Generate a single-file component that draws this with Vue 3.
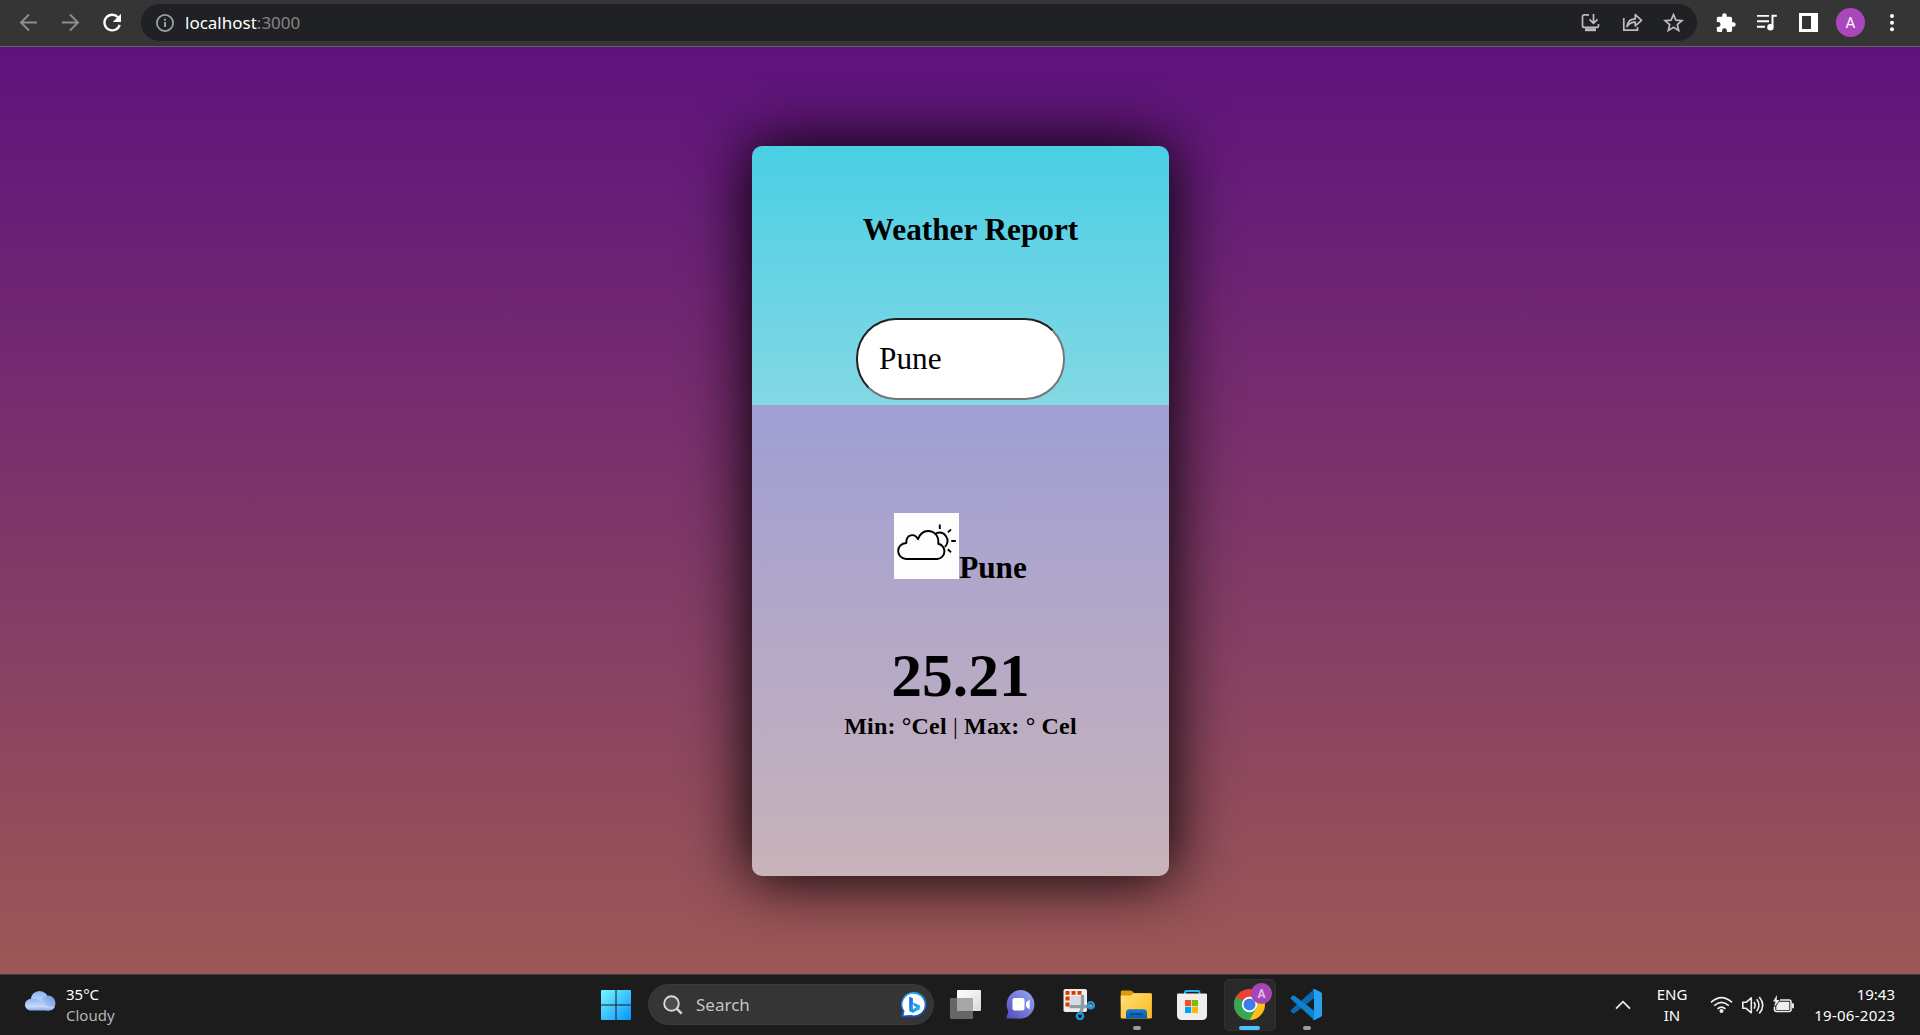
<script setup>
import { ref } from 'vue'

const city = ref('Pune')
const report = { name: 'Pune', temp: 25.21 }
</script>

<template>
  <div class="screen">
    <header class="toolbar">
      <svg class="nav" viewBox="0 0 141 46" fill="none">
        <g stroke="#8d8d8d" stroke-width="1.9">
          <path d="M37 22.5H21.500M29 14.500l-8 8 8 8" />
          <path d="M62 22.500h15.500M70 14.500l8 8-8 8" />
        </g>
        <path d="M118 17.300A7.800 7.800 0 1 0 119.700 24.800" stroke="#fff" stroke-width="2.300" />
        <path d="M121 13.800v8.200h-8.200z" fill="#fff" />
      </svg>
      <div class="omnibox">
        <svg class="info" viewBox="0 0 20 20" fill="none">
          <circle cx="10" cy="10" r="8.100" stroke="#9aa0a6" stroke-width="1.800" />
          <path d="M10 8.900v5.200M10 5.700v2" stroke="#9aa0a6" stroke-width="2" />
        </svg>
        <span class="url">localhost<i>:3000</i></span>
        <svg class="actions" viewBox="1570 4 127 37" fill="none" stroke="#bdbdbd" stroke-width="1.700">
          <path d="M1589 14.900h-4.500q-2 0-2 2v8.500q0 2 2 2h12q2 0 2-2v-1.500M1593.500 14v9M1589.500 19.300l4 4 4-4" />
          <path d="M1585 29.700h11" stroke-width="3" />
          <path d="M1623.800 18v12.200h13.700V27" />
          <path d="M1627 26.500c.8-5.500 4.300-7.700 8.300-7.700v-4.300l6.200 5.800-6.200 5.600v-3.700c-3.700 0-6.200 1.200-8.300 4.300z" stroke-linejoin="round" />
          <path d="M1673.500 14.600l2.400 5.500 6 .5-4.600 3.900 1.400 5.900-5.200-3.100-5.200 3.100 1.400-5.900-4.600-3.900 6-.5z" />
        </svg>
      </div>
      <svg class="menu" viewBox="1697 0 223 46">
        <path transform="translate(1715 12.300) scale(.9)" fill="#fff" d="M20.500 11H19V7c0-1.100-.9-2-2-2h-4V3.500a2.500 2.500 0 0 0-5 0V5H4c-1.100 0-2 .9-2 2v3.800h1.500a2.700 2.700 0 0 1 0 5.400H2V20c0 1.100.9 2 2 2h3.800v-1.500a2.700 2.700 0 0 1 5.400 0V22H17c1.100 0 2-.9 2-2v-4h1.500a2.500 2.500 0 0 0 0-5z" />
        <path d="M1757 15.900h12M1757 21.300h12M1757 26.800h8" stroke="#fff" stroke-width="1.900" />
        <path d="M1776.800 15.800h-4.300v11" fill="none" stroke="#fff" stroke-width="2" />
        <circle cx="1770.400" cy="27.300" r="3.200" fill="#fff" />
        <path fill="#fff" fill-rule="evenodd" d="M1799 13h19v19h-19zM1802 16v13h9V16z" />
        <circle cx="1850.500" cy="22.500" r="14.500" fill="#ab47bc" />
        <text x="1850.500" y="27.800" text-anchor="middle" class="initial">A</text>
        <g fill="#fff"><circle cx="1892" cy="16" r="2" /><circle cx="1892" cy="22.700" r="2" /><circle cx="1892" cy="29.300" r="2" /></g>
      </svg>
    </header>

    <main class="page">
      <section class="card">
        <div class="search-panel">
          <h1>Weather Report</h1>
          <input v-model="city" type="text" spellcheck="false" />
        </div>
        <div class="result">
          <div class="place">
            <svg viewBox="0 0 65 66" fill="none" stroke="#000" stroke-width="1.900" stroke-linecap="round">
              <rect width="65" height="66" fill="#fdfdfd" stroke="none" />
              <path d="M12 46H43.500a7.700 7.700 0 0 0 .8-15.200C45 23 40.500 18 34 18c-4.500 0-8 2.600-10 8.200C20.500 19.500 12 21.500 12.300 30 1.500 30.500 1.500 45 12 46z" stroke-linejoin="round" />
              <path d="M42.500 20.200c8-2.800 14.500 6.300 8.800 13.300" />
              <path d="M45.800 11.500v4.500M54 19.300l3-3M57.300 28h4.500M53.800 36.300l3.200 3" stroke-linecap="butt" />
            </svg>
            <span>{{ report.name }}</span>
          </div>
          <div class="temp">{{ report.temp }}</div>
          <div class="range"><b>Min: °Cel</b> | <b>Max: ° Cel</b></div>
        </div>
      </section>
    </main>

    <footer class="taskbar">
      <div class="weather">
        <svg viewBox="0 0 32 22">
          <defs>
            <linearGradient id="cloud" x1="0" y1="0" x2="0" y2="1"><stop stop-color="#8bb4f5" /><stop offset=".65" stop-color="#c6daf8" /><stop offset="1" stop-color="#85aae9" /></linearGradient>
            <linearGradient id="puff" x1="0" y1="1" x2="1" y2="0"><stop stop-color="#d2e1fa" /><stop offset="1" stop-color="#6292e3" /></linearGradient>
          </defs>
          <circle cx="15.500" cy="9.800" r="8.800" fill="url(#cloud)" />
          <circle cx="24" cy="13" r="7.500" fill="url(#puff)" />
          <path d="M7 20.600h17.500q5 0 6.500-4c-7 1-10-1-13-3.600C13 7 1 7.500 1 14.600 1 18 3.500 20.600 7 20.600z" fill="url(#cloud)" />
        </svg>
        <div class="lines"><span>35°C</span><span class="dim">Cloudy</span></div>
      </div>
      <div class="apps">
        <svg class="start" viewBox="0 0 30 30">
          <linearGradient id="win" x2="1" y2="1"><stop stop-color="#7af5ff" /><stop offset="1" stop-color="#0594fd" /></linearGradient>
          <path fill="url(#win)" d="M1 0h13.500v14.500H0V1q0-1 1-1zM15.500 0H29q1 0 1 1v13.500H15.500zM0 15.500h14.500V30H1q-1 0-1-1zM15.500 15.500H30V29q0 1-1 1H15.500z" />
        </svg>
        <div class="search">
          <svg class="lens" viewBox="0 0 20 20" fill="none" stroke="#d9d9d9"><circle cx="8.500" cy="8.500" r="7.300" stroke-width="1.900" fill="#4c4c4c" /><path d="M13.700 13.700l5 5" stroke-width="2.500" /></svg>
          <span>Search</span>
          <svg class="bing" viewBox="0 0 26 26">
            <linearGradient id="bb" x2=".3" y2="1"><stop stop-color="#20b9ee" /><stop offset="1" stop-color="#1748c8" /></linearGradient>
            <linearGradient id="bl" x2="1" y2="1"><stop stop-color="#1660df" /><stop offset="1" stop-color="#28c9f5" /></linearGradient>
            <path d="M13 0a12.600 12.600 0 1 1 0 25.200H.5V22l1.300-3A12.600 12.600 0 0 1 13 0z" fill="url(#bb)" />
            <path d="M13 1.900a10.800 10.800 0 1 1-3 21.200l-7.500.4 1-4.500A10.800 10.800 0 0 1 13 1.900z" fill="#fff" />
            <path d="M8.200 4.700l3.700 1.500v11l3.500-2-2.300-1.100-1.200-3.700 7 2.800v4.100L11.700 21l-3.500-2z" fill="url(#bl)" />
          </svg>
        </div>
        <svg class="slot" viewBox="938 975 57 60">
          <linearGradient id="tv" x2="1" y2="1"><stop stop-color="#fff" /><stop offset="1" stop-color="#d9d9d9" /></linearGradient>
          <rect x="957" y="990" width="24" height="21" rx="1" fill="url(#tv)" />
          <rect x="950" y="998" width="23" height="21" rx="1" fill="#666" /><path d="M957 998h16v13h-16z" fill="#a7a7a7" />
        </svg>
        <svg class="slot" viewBox="995.500 975 57 60">
          <linearGradient id="chat" x1="1" x2="0" y2="1"><stop stop-color="#91a9f2" /><stop offset=".5" stop-color="#777cda" /><stop offset="1" stop-color="#5148be" /></linearGradient>
          <path d="M1022 990a14.400 14.400 0 1 1-4 28.500h-11v-1.500l1.800-5.500A14.600 14.600 0 0 1 1022 990z" fill="url(#chat)" />
          <rect x="1013" y="998" width="12" height="12.500" rx="2" fill="#fff" /><path d="M1026.500 1002.500l3.700-3v10l-3.700-3z" fill="#fff" />
        </svg>
        <svg class="slot" viewBox="1052 975 57 60">
          <rect x="1063.500" y="989" width="23.500" height="23" rx="1.800" fill="#eee" />
          <rect x="1070" y="996" width="11" height="10" fill="#d8dce0" />
          <path d="M1065.500 992.800h17" stroke="#d83b01" stroke-width="3.700" stroke-dasharray="4 2" fill="none" />
          <path d="M1067.500 996.500v10" stroke="#d83b01" stroke-width="4" stroke-dasharray="4 2" fill="none" />
          <path d="M1069.500 1006.700h17q4 0 5.500-2M1082.500 995v9q0 7-3.500 10" stroke="#909ba3" stroke-width="3.300" fill="none" />
          <g fill="none" stroke="#1b9de2" stroke-width="2.300"><circle cx="1090.800" cy="1005.200" r="3.100" /><circle cx="1080" cy="1016" r="3.100" /></g>
        </svg>
        <svg class="slot" viewBox="1109 975 57 60">
          <linearGradient id="fold" x2="1" y2="1"><stop stop-color="#ffe078" /><stop offset="1" stop-color="#fdb91c" /></linearGradient>
          <linearGradient id="fb" x2="0" y2="1"><stop stop-color="#147cd3" /><stop offset="1" stop-color="#075da9" /></linearGradient>
          <path d="M1122 990.500h8.500q1 0 1.800.8l2 2h16q1.500 0 1.500 1.500V1002h-31v-10q0-1.500 1.200-1.500z" fill="#dc9a05" />
          <path d="M1120.700 995.500h10l2.800-2.200h17q1.400 0 1.400 1.400v22.700q0 1-1 1h-29q-1.200 0-1.200-1z" fill="url(#fold)" />
          <path d="M1126 1018.300v-5.500q0-3.500 3.500-3.500h14q3.500 0 3.500 3.500v5.500z" fill="url(#fb)" /><path d="M1130 1014.200h12.500" stroke="#064579" stroke-width="1.700" />
          <rect x="1133" y="1026" width="8" height="4" rx="2" fill="#9a9a9a" />
        </svg>
        <svg class="slot" viewBox="1166 975 57 60">
          <path d="M1185 994.500v-2q0-1.500 1.500-1.500h11.500q1.500 0 1.500 1.500v2" fill="none" stroke="#27b5ee" stroke-width="2" />
          <path d="M1178 993.500h28q1 0 1 1v20.500q0 5-5 5h-20q-5 0-5-5v-20.500q0-1 1-1z" fill="#eee" />
          <path d="M1185 1000h6.200v6.200h-6.200z" fill="#f25022" /><path d="M1192 1000h6v6.200h-6z" fill="#7fba00" /><path d="M1185 1007h6.200v6h-6.200z" fill="#00a4ef" /><path d="M1192 1007h6v6h-6z" fill="#ffb900" />
        </svg>
        <svg class="slot" viewBox="1223 975 57 60">
          <rect x="1224.500" y="979.500" width="51" height="51" rx="5" fill="#292929" stroke="#333" />
          <g transform="translate(1249.500 1004.500)">
            <circle r="15.500" fill="#ea4335" />
            <path d="M0 0L-13.400-7.700A15.500 15.500 0 0 0 0 15.500L7 3.800z" fill="#34a853" />
            <path d="M0-7.700H13.400A15.500 15.500 0 0 1 0 15.500L6.800 3.700z" fill="#fbc116" />
            <circle r="7.700" fill="#fff" /><circle r="6" fill="#3b7ded" />
          </g>
          <circle cx="1261.500" cy="993.500" r="10.500" fill="#a646b5" />
          <text x="1261.500" y="998" text-anchor="middle" class="badge">A</text>
          <rect x="1239" y="1026" width="21" height="4" rx="2" fill="#4cc2ff" />
        </svg>
        <svg class="slot" viewBox="1280 975 57 60">
          <path d="M1314 989.200l-23 20.700q-.8 1 0 1.800l1.800 1.500q.9.500 1.700 0L1314.500 998z" fill="#0969b5" />
          <path d="M1314 1019.800L1291 999q-.8-1 0-1.800l1.800-1.600q.9-.4 1.700.1l20 15.400z" fill="#0c83ce" />
          <path d="M1314.500 989l6.500 3.200q1 .5 1 1.700v21.200q0 1.200-1 1.700l-6.500 3.200q-.8.300-1.800-.6 1.300 0 1.300-1.500v-26.500q0-1.500-1.300-1.700 1-.9 1.800-.7z" fill="#27a1ee" />
          <rect x="1303" y="1026" width="8" height="4" rx="2" fill="#9a9a9a" />
        </svg>
      </div>
      <div class="tray">
        <svg class="chev" viewBox="0 0 16 10" fill="none" stroke="#eee" stroke-width="1.800"><path d="M1 8.700l7-7 7 7" /></svg>
        <div class="lines lang"><span>ENG</span><span>IN</span></div>
        <svg class="status" viewBox="1708 990 90 30" fill="none" stroke="#eee" stroke-width="1.600">
          <path d="M1711 1002.400q10.500-9.600 21 0M1714.200 1005.700q7.300-6.800 14.600 0M1717.500 1008.900q4-3.600 8 0" />
          <circle cx="1721.500" cy="1011" r="2" fill="#eee" stroke="none" />
          <path d="M1742.800 1002.300h3.300l5.200-4.500v15l-5.200-4.500h-3.300z" stroke-linejoin="round" />
          <path d="M1754 1002q2.200 3.300 0 6.600M1756.700 999.300q4.500 6 0 12M1759.300 997q7 8.300 0 16.500" />
          <path d="M1780 1000h9q2 0 2 2v7.500q0 2-2 2h-12.500q-2 0-2-2v-2.500" />
          <path d="M1779 1001.700h10.300v8.200h-13v-4z" fill="#eee" stroke="none" /><path d="M1792.800 1003.300v5" stroke-width="2.200" />
          <path d="M1777 995l-4 6.500h2.500l-1.500 6 5.500-7.500h-2.800z" fill="#eee" stroke="none" />
        </svg>
        <div class="lines clock"><span>19:43</span><span class="date">19-06-2023</span></div>
      </div>
    </footer>
  </div>
</template>

<style>
body { margin: 0; overflow: hidden; background: #1c1c1c; }
</style>

<style scoped>
.screen { width: 1920px; height: 1035px; display: flex; flex-direction: column; overflow: hidden; font-family: "Noto Sans", "Open Sans", sans-serif; }
svg { display: block; flex: none; }
.toolbar { box-sizing: border-box; height: 47px; flex: none; display: flex; background: #353535; border-bottom: 1px solid #636363; }
.nav { width: 141px; height: 46px; }
.omnibox { width: 1556px; height: 37px; margin-top: 4px; border-radius: 19px; background: #202124; display: flex; align-items: center; }
.info { width: 20px; height: 20px; margin-left: 14px; }
.url { margin-left: 10px; font-size: 17px; line-height: 24px; color: #fff; white-space: nowrap; }
.url i { font-style: normal; color: #858585; }
.actions { width: 127px; height: 37px; margin-left: auto; }
.menu { width: 223px; height: 46px; }
.initial { font: 15px Roboto, sans-serif; fill: #fff; }
.badge { font: bold 12px Roboto, sans-serif; fill: #e6b8ec; }

.page { height: 927px; flex: none; box-sizing: border-box; padding-top: 99px; background: linear-gradient(#5e127e, #9c5855); font-family: "Liberation Serif", serif; color: #000; overflow: hidden; }
.card { width: 417px; height: 730px; margin: 0 auto 0 752px; border-radius: 10px; box-shadow: 0 0 62px 3px #000; }
.search-panel { height: 259px; box-sizing: border-box; padding-top: 66px; border-radius: 10px 10px 0 0; background: linear-gradient(#4acfe4, #83d8e4); display: flex; flex-direction: column; align-items: center; }
h1 { margin: 0 0 0 20px; font-size: 31.25px; line-height: 36px; white-space: nowrap; }
input { box-sizing: border-box; width: 209px; height: 82px; margin: 70px 0 0; padding: 0 20px 0 21px; border: 2px inset #767676; border-radius: 40px; background: #fff; color: #000; font: 31.25px "Liberation Serif", serif; outline: none; }
.result { height: 471px; box-sizing: border-box; padding-top: 108px; border-radius: 0 0 10px 10px; background: linear-gradient(#9f9ed4, #c9b3ba); display: flex; flex-direction: column; align-items: center; }
.place { height: 66px; display: flex; align-items: flex-end; font-size: 31.25px; font-weight: bold; line-height: 34px; }
.place svg { width: 65px; height: 66px; }
.place span { margin-bottom: -6px; }
.temp { margin-top: 62px; font-size: 61.5px; font-weight: bold; line-height: 68px; }
.range { margin-top: 3px; font-size: 24px; line-height: 28px; letter-spacing: .18px; white-space: pre; }

.taskbar { height: 61px; flex: none; box-sizing: border-box; display: flex; border-top: 1px solid #3c3b3b; background: #1c1c1c; color: #fff; }
.weather { width: 601px; display: flex; box-sizing: border-box; padding-left: 24px; }
.weather svg { width: 32px; height: 22px; margin: 15px 10px 0 0; }
.lines { display: flex; flex-direction: column; padding-top: 9px; font-size: 15px; line-height: 21px; white-space: nowrap; }
.dim { color: #b5b5b5; }
.apps { display: flex; }
.start { width: 30px; height: 30px; margin-top: 15px; }
.search { box-sizing: border-box; width: 286px; height: 41px; margin: 9px 4px 0 17px; border: 1px solid #3b3b3b; border-radius: 21px; background: #353535; display: flex; align-items: center; color: #c4c4c4; font-size: 17px; }
.lens { width: 20px; height: 20px; margin: 0 13px 0 14px; }
.bing { width: 26px; height: 26px; margin: 0 6px 0 auto; }
.slot { width: 57px; height: 60px; }
.tray { margin-left: auto; padding-right: 25px; display: flex; }
.chev { width: 16px; height: 10px; margin: 25px 26px 0 0; }
.lang { align-items: center; width: 30px; margin-right: 21px; }
.status { width: 90px; height: 30px; margin-top: 15px; }
.clock { width: 97px; align-items: flex-end; }
.date { letter-spacing: .28px; margin-right: -.28px; }
</style>
